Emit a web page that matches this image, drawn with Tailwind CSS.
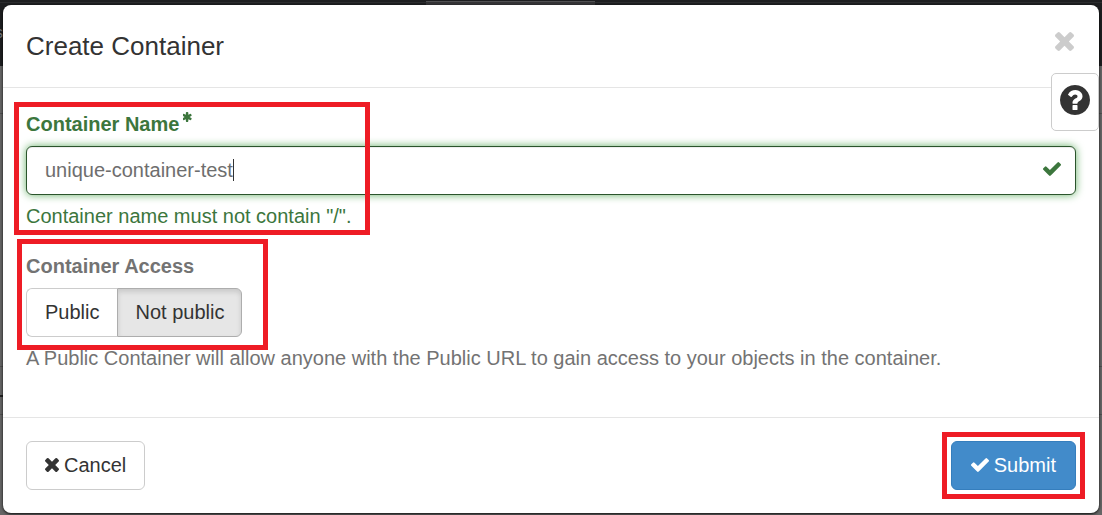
<!DOCTYPE html>
<html lang="en">
<head>
<meta charset="utf-8">
<meta name="viewport" content="width=device-width, initial-scale=1">
<title>Create Container</title>
<script src="https://cdn.jsdelivr.net/npm/@tailwindcss/browser@4"></script>
</head>
<body class="relative min-h-screen overflow-hidden bg-[#666] font-['Liberation_Sans',Arial,sans-serif] text-xl leading-7 text-[#333]">
<svg class="hidden" aria-hidden="true">
  <symbol id="times" viewBox="302 302 1188 1188"><path d="M1490 1258q0 40-28 68l-136 136q-28 28-68 28t-68-28l-294-294-294 294q-28 28-68 28t-68-28l-136-136q-28-28-28-68t28-68l294-294-294-294q-28-28-28-68t28-68l136-136q28-28 68-28t68 28l294 294 294-294q28-28 68-28t68 28l136 136q28 28 28 68t-28 68l-294 294 294 294q28 28 28 68z"/></symbol>
  <symbol id="check" viewBox="121 334 1550 1188"><path d="M1671 566q0 40-28 68l-724 724-136 136q-28 28-68 28t-68-28l-136-136-362-362q-28-28-28-68t28-68l136-136q28-28 68-28t68 28l294 295 656-657q28-28 68-28t68 28l136 136q28 28 28 68z"/></symbol>
</svg>

<!-- dimmed page behind the dialog -->
<div class="absolute inset-x-0 top-0 -z-0 h-[66px] overflow-hidden bg-[#1d1e20]" aria-hidden="true">
  <div class="absolute inset-x-0 top-[2px] h-px bg-[#2b2c2e]"></div>
  <div class="absolute left-[426px] top-px h-4 w-[169px] border-t border-[#505052] bg-[#343436]"></div>
  <span class="absolute -left-[5px] top-[21px] text-base text-[#77787a]">s</span>
</div>
<div class="absolute inset-x-0 top-[113px] h-px bg-[#505050]"></div>
<div class="absolute inset-x-0 top-[366px] h-px bg-[#505050]"></div>
<div class="absolute left-0 top-[395px] h-[2px] w-[3px] bg-[#222]"></div>
<div class="absolute inset-x-0 top-[414px] h-px bg-[#505050]"></div>

<main role="dialog" aria-labelledby="title" class="relative mx-[3px] mt-[5px] rounded-lg bg-white shadow-[0_1px_3px_rgba(0,0,0,0.9)]">
  <header class="flex items-center justify-between border-b border-[#e5e5e5] px-[23px] py-[23px]">
    <h1 id="title" class="text-[26px] leading-9">Create Container</h1>
    <button type="button" aria-label="Close" class="mr-0.5 -mt-2.5 text-[#ccc]"><svg class="size-[19px] fill-current"><use href="#times"/></svg></button>
  </header>

  <form id="create" class="px-[23px] pt-[22px] pb-[45px]">
    <div class="relative text-[#3c763d]">
      <label for="name" class="flex font-bold">Container Name
        <svg class="ml-1 mt-[2px] h-[10px] w-[9px] fill-current" viewBox="195 128 1402 1536"><path d="M1482 1050q46 26 59.500 77.500t-12.500 97.500l-64 110q-26 46-77.500 59.500t-97.500-12.500l-266-153v307q0 52-38 90t-90 38h-128q-52 0-90-38t-38-90v-307l-266 153q-46 26-97.500 12.500t-77.500-59.500l-64-110q-26-46-12.500-97.500t59.500-77.500l266-154-266-154q-46-26-59.500-77.500t12.500-97.500l64-110q26-46 77.500-59.500t97.500 12.500l266 153v-307q0-52 38-90t90-38h128q52 0 90 38t38 90v307l266-153q46-26 97.500-12.500t77.500 59.500l64 110q26 46 12.500 97.500t-59.500 77.500l-266 154z"/></svg>
      </label>
      <div class="relative mt-2">
        <input id="name" type="text" value="unique-container-test" aria-describedby="name-help" class="block h-[49px] w-full rounded-md border border-[#2b542c] bg-white pr-12 pl-[18px] text-[#6e6e6e] shadow-[inset_0_1px_1px_rgba(0,0,0,0.075),0_0_9px_#67b168] outline-none">
        <span class="absolute left-[207px] top-[13px] h-[22px] w-px bg-[#333]"></span>
        <svg class="absolute right-[15px] top-4 h-[14px] w-[18px] fill-current"><use href="#check"/></svg>
      </div>
      <p id="name-help" class="mt-[7px]">Container name must not contain "/".</p>
      <div class="pointer-events-none absolute -top-[8px] -left-3 h-[133px] w-[356px] border-5 border-[#ee1c25]"></div>
    </div>

    <div class="relative mt-[22px] text-[#737373]">
      <div id="access" class="font-bold">Container Access</div>
      <div role="group" aria-labelledby="access" class="mt-2 flex text-[#333]">
        <button type="button" aria-pressed="false" class="h-[49px] rounded-l-md border border-r-0 border-[#ccc] bg-white px-[18px] pb-[2px]">Public</button>
        <button type="button" aria-pressed="true" class="h-[49px] rounded-r-md border border-[#adadad] bg-[#e6e6e6] px-[17px] pb-[2px] shadow-[inset_0_3px_5px_rgba(0,0,0,0.125)]">Not public</button>
      </div>
      <p class="mt-[7px]">A Public Container will allow anyone with the Public URL to gain access to your objects in the container.</p>
      <div class="pointer-events-none absolute -top-[13px] -left-[9px] h-[111px] w-[251px] border-5 border-[#ee1c25]"></div>
    </div>
  </form>

  <footer class="flex items-center justify-between border-t border-[#e5e5e5] p-[23px]">
    <button type="button" class="flex h-[49px] items-center gap-[5px] rounded-md border border-[#ccc] bg-white px-[18px] pb-[2px]"><svg class="size-[14px] fill-current"><use href="#times"/></svg>Cancel</button>
    <div class="relative">
      <button type="submit" form="create" class="flex h-[49px] items-center gap-[5px] rounded-md border border-[#357ebd] bg-[#428bca] px-[19px] pb-[2px] text-white"><svg class="h-[14px] w-[18px] fill-current"><use href="#check"/></svg>Submit</button>
      <div class="pointer-events-none absolute -inset-[9px] border-5 border-[#ee1c25]"></div>
    </div>
  </footer>
</main>

<button type="button" aria-label="Help" class="absolute right-[3px] top-[73px] flex h-[58px] w-12 items-center justify-center rounded-[5px] border border-[#ccc] bg-white pb-1">
  <svg class="size-[30px] fill-[#333]" viewBox="128 128 1536 1536"><path d="M1024 1376v-192q0-14-9-23t-23-9h-192q-14 0-23 9t-9 23v192q0 14 9 23t23 9h192q14 0 23-9t9-23zm256-672q0-88-55.500-163t-138.500-116-170-41q-243 0-371 213-15 24 8 42l132 100q7 6 19 6 16 0 25-12 53-68 86-92 34-24 86-24 48 0 85.500 26t37.500 59q0 38-20 61t-68 45q-63 28-115.500 86.500t-52.500 125.500v36q0 14 9 23t23 9h192q14 0 23-9t9-23q0-19 21.500-49.500t54.500-49.500q32-18 49-28.500t46-35 44.500-48 28-60.500 12.500-81zm384 192q0 209-103 385.500t-279.500 279.500-385.500 103-385.500-103-279.500-279.500-103-385.500 103-385.500 279.500-279.500 385.500-103 385.500 103 279.500 279.500 103 385.500z"/></svg>
</button>
</body>
</html>
